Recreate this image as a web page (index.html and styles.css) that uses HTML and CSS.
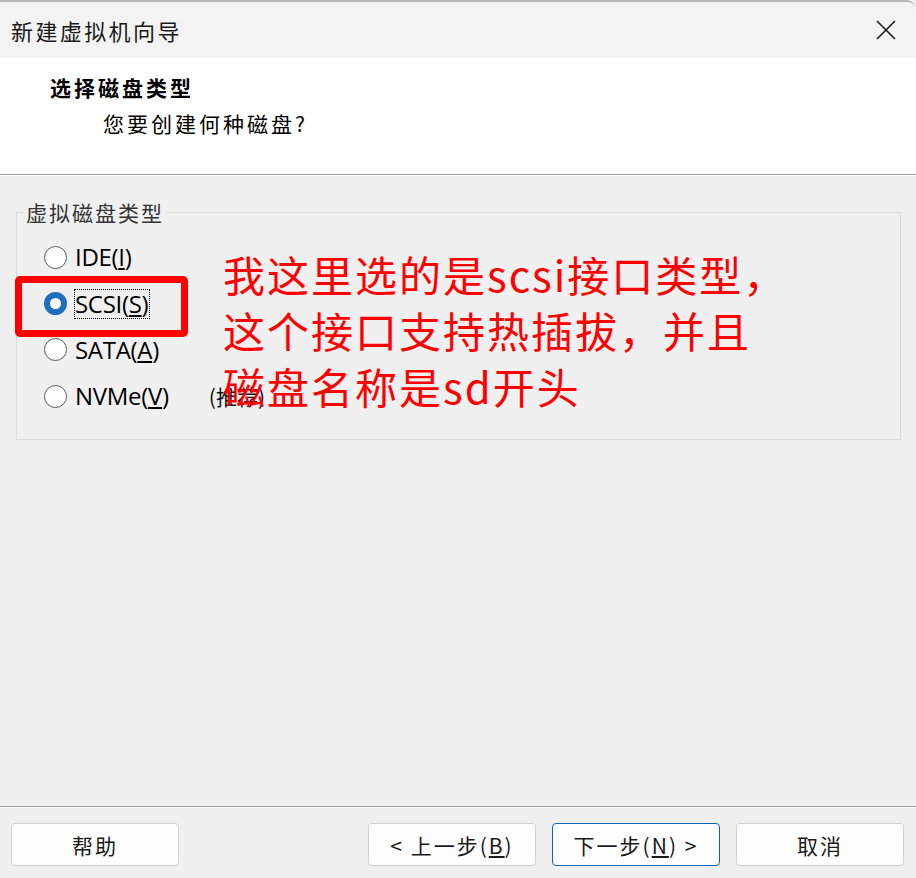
FILE: index.html
```html
<!DOCTYPE html>
<html lang="zh-CN">
<head>
<meta charset="utf-8">
<title>新建虚拟机向导</title>
<link rel="stylesheet" href="styles.css">
</head>
<body>
<div class="window">
  <div class="titlebar">
    <span class="title">新建虚拟机向导</span>
    <svg class="close" width="22" height="22" viewBox="0 0 22 22"><path d="M2 2 L20 20 M20 2 L2 20" stroke="#1a1a1a" stroke-width="1.6" fill="none"/></svg>
  </div>
  <div class="header">
    <div class="h-title">选择磁盘类型</div>
    <div class="h-sub">您要创建何种磁盘?</div>
  </div>
  <div class="body">
    <fieldset class="group">
      <legend>虚拟磁盘类型</legend>
      <div class="radio"><span class="circle"></span><span class="label">IDE(<u>I</u>)</span></div>
      <div class="radio"><span class="circle checked"></span><span class="label focus">SCSI(<u>S</u>)</span></div>
      <div class="radio"><span class="circle"></span><span class="label">SATA(<u>A</u>)</span></div>
      <div class="radio"><span class="circle"></span><span class="label">NVMe(<u>V</u>)</span><span class="rec">(推荐)</span></div>
    </fieldset>
    <div class="redbox"></div>
    <div class="note">我这里选的是scsi接口类型，<br>这个接口支持热插拔，并且<br>磁盘名称是sd开头</div>
  </div>
  <div class="footer">
    <button class="btn">帮助</button>
    <div class="spacer"></div>
    <button class="btn">&lt; 上一步(<u>B</u>)</button>
    <button class="btn primary">下一步(<u>N</u>) &gt;</button>
    <button class="btn">取消</button>
  </div>
</div>
</body>
</html>
```
FILE: styles.css
```css
html, body {
  margin: 0;
  padding: 0;
  background: #f0f0f0;
}
body {
  font-family: "Noto Sans", "Noto Sans CJK SC", sans-serif;
  color: #000;
}
.window {
  width: 916px;
  height: 878px;
  display: flex;
  flex-direction: column;
  box-sizing: border-box;
  border-top: 2px solid #b4b4b4;
  border-top-right-radius: 10px;
  overflow: hidden;
  position: relative;
  background: #f0f0f0;
}
.titlebar {
  height: 56px;
  background: #f3f3f3;
  display: flex;
  align-items: center;
  justify-content: space-between;
  padding: 0 19px 0 11px;
}
.title {
  font-family: "Noto Sans CJK SC", sans-serif;
  font-size: 22px;
  letter-spacing: 2.4px;
  color: #1a1a1a;
}
.close { display: block; }
.header {
  height: 117px;
  background: #fff;
  border-bottom: 1px solid #a0a0a0;
  box-sizing: border-box;
  padding-top: 13px;
}
.h-title {
  font-family: "Noto Sans CJK SC", sans-serif;
  font-weight: bold;
  font-size: 21px;
  letter-spacing: 3px;
  margin-left: 50px;
  line-height: 32px;
}
.h-sub {
  font-family: "Noto Sans CJK SC", sans-serif;
  font-size: 21px;
  letter-spacing: 3px;
  margin-left: 103px;
  margin-top: 5px;
  line-height: 30px;
}
.body {
  flex: 1;
  position: relative;
  border-top: 1px solid #fff;
  padding: 22px 15px 0 16px;
}
.group {
  margin: 0;
  height: 242px;
  box-sizing: border-box;
  border: 1px solid #dcdcdc;
  padding: 8px 0 0 25px;
}
.group legend {
  font-family: "Noto Sans CJK SC", sans-serif;
  font-size: 21px;
  letter-spacing: 2px;
  color: #333;
  padding: 0 2px;
  margin-left: -18px;
  line-height: 28px;
}
.radio {
  display: flex;
  align-items: center;
  height: 46.4px;
}
.circle {
  width: 23px;
  height: 23px;
  box-sizing: border-box;
  border: 1.5px solid #5a5a5a;
  border-radius: 50%;
  background: #fff;
  margin-left: 2px;
  margin-right: 7px;
  flex: none;
}
.circle.checked {
  border: 6px solid #1f6fbf;
  background: #fff;
}
.label {
  font-family: "Open Sans", "Noto Sans", sans-serif;
  font-size: 24px;
  line-height: 28px;
  padding: 0 1px 0 0;
  border: 1px dotted transparent;
  letter-spacing: -0.3px;
}
.label.focus { border-color: #000; }
.rec {
  font-family: "Noto Sans CJK SC", sans-serif;
  font-size: 21px;
  margin-left: 38px;
  color: #111;
}
.redbox {
  position: absolute;
  left: 15px;
  top: 100px;
  width: 173px;
  height: 61px;
  box-sizing: border-box;
  border: 7px solid #ff0000;
  border-radius: 5px;
}
.note {
  position: absolute;
  left: 223px;
  top: 70px;
  font-family: "Noto Sans CJK SC", sans-serif;
  font-size: 42px;
  line-height: 56px;
  color: #ff0000;
  letter-spacing: 2px;
}
.footer {
  height: 72px;
  border-top: 1px solid #a0a0a0;
  box-shadow: inset 0 1px 0 #fff;
  display: flex;
  align-items: flex-start;
  padding: 16px 12px 0 11px;
  gap: 16px;
  box-sizing: border-box;
}
.spacer { flex: 1; }
.btn {
  width: 168px;
  height: 43px;
  background: #fdfdfd;
  border: 1px solid #d0d0d0;
  border-radius: 4px;
  font-family: "Noto Sans CJK SC", sans-serif;
  font-size: 21px;
  letter-spacing: 2px;
  color: #1a1a1a;
  padding: 0;
}
.btn.primary { border-color: #0067c0; }
```
